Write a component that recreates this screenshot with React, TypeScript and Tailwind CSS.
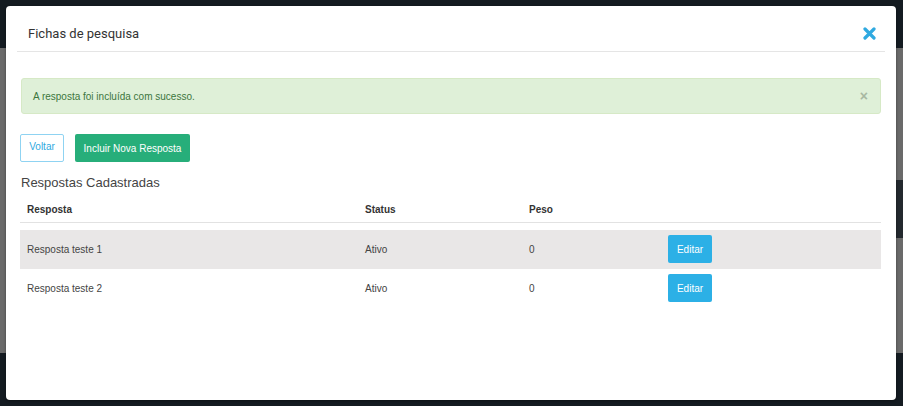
import React from "react";

const rows = [
  { name: "Resposta teste 1", status: "Ativo", peso: "0" },
  { name: "Resposta teste 2", status: "Ativo", peso: "0" },
];

export default function App() {
  return (
    <div className="relative w-[903px] h-[406px] overflow-hidden bg-[#141b21] font-['Liberation_Sans',Arial,sans-serif]">
      {/* dimmed page behind the modal */}
      <div className="flex flex-col h-full">
        <div className="h-[48px] bg-[#141b21]" />
        <div className="relative h-[305px] bg-[#6a6a6a]">
          <div className="absolute right-0 top-[132px] w-[10px] h-[58px] bg-[#23292e]" />
        </div>
        <div className="flex-1 bg-[#141b21]" />
      </div>

      {/* modal */}
      <div className="absolute left-[6px] top-[6px] w-[890px] h-[394px] rounded-[4px] bg-white shadow-[0_1px_3px_rgba(0,0,0,0.4)]">
        <div className="mx-[11px] h-[46px] flex items-center justify-between border-b border-[#e5e5e5] pl-[11px] pr-[9px]">
          <h4 className="text-[13px] text-[#333] font-['Roboto',sans-serif] mt-[10px]">Fichas de pesquisa</h4>
          <button className="mt-[10px] text-[#2fa9e0]">
            <svg width="13" height="13" viewBox="0 0 13 13">
              <path d="M2 2 L11 11 M11 2 L2 11" stroke="currentColor" strokeWidth="3.2" strokeLinecap="round" />
            </svg>
          </button>
        </div>

        <div className="px-[15px]">
          <div className="mt-[26px] h-[36px] flex items-center justify-between rounded-[3px] border border-[#d6e9c6] bg-[#dff0d8] pl-[11px] pr-[12px]">
            <span className="text-[10px] text-[#3c763d]">A resposta foi incluída com sucesso.</span>
            <span className="text-[14px] leading-none font-bold text-[#a8b8a2]">×</span>
          </div>

          <div className="mt-[20px] flex gap-[11px] -ml-px">
            <button className="w-[44px] h-[28px] rounded-[2px] border border-[#8fd3f2] bg-white text-[10px] text-[#2fa9e0] pb-[4px]">
              Voltar
            </button>
            <button className="w-[115px] h-[28px] rounded-[2px] bg-[#27ae7a] text-[10px] text-white">
              Incluir Nova Resposta
            </button>
          </div>

          <h3 className="mt-[11px] text-[13px] text-[#444]">Respostas Cadastradas</h3>

          <div className="mt-[9px] -ml-px">
            <div className="grid grid-cols-[338px_164px_139px_1fr] h-[21px] border-b border-[#e2e2e2] text-[10px] font-bold text-[#333]">
              <div className="pl-[7px]">Resposta</div>
              <div className="pl-[7px]">Status</div>
              <div className="pl-[7px]">Peso</div>
              <div />
            </div>
            <div className="mt-[7px]">
              {rows.map((r, i) => (
                <div
                  key={r.name}
                  className={
                    "grid grid-cols-[338px_164px_139px_1fr] h-[39px] items-center text-[10px] text-[#444] " +
                    (i === 0 ? "bg-[#e9e7e7]" : "")
                  }
                >
                  <div className="pl-[7px]">{r.name}</div>
                  <div className="pl-[7px]">{r.status}</div>
                  <div className="pl-[7px]">{r.peso}</div>
                  <div className="pl-[7px]">
                    <button className="w-[44px] h-[28px] rounded-[2px] bg-[#2cb0e6] text-[10px] text-white">
                      Editar
                    </button>
                  </div>
                </div>
              ))}
            </div>
          </div>
        </div>
      </div>
    </div>
  );
}
